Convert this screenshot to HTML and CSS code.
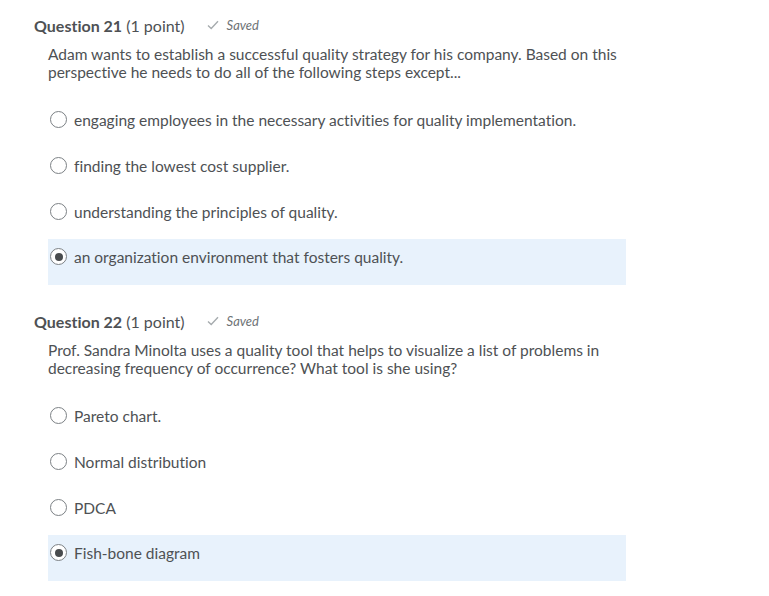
FILE: index.html
```html
<!DOCTYPE html>
<html>
<head>
<meta charset="utf-8">
<link rel="stylesheet" href="styles.css">
</head>
<body>
<div class="page">
  <section class="question">
    <div class="q-head">
      <span class="q-title"><b>Question 21</b> (1 point)</span>
      <span class="saved"><svg class="check" width="12" height="10" viewBox="0 0 12 10"><path d="M1 5.5 L4.2 8.5 L11 1.2" fill="none" stroke="#a6abae" stroke-width="1.4"/></svg><i>Saved</i></span>
    </div>
    <p class="prompt">Adam wants to establish a successful quality strategy for his company. Based on this perspective he needs to do all of the following steps except...</p>
    <div class="options">
      <div class="option"><span class="radio"></span><span>engaging employees in the necessary activities for quality implementation.</span></div>
      <div class="option"><span class="radio"></span><span>finding the lowest cost supplier.</span></div>
      <div class="option"><span class="radio"></span><span>understanding the principles of quality.</span></div>
      <div class="option selected"><span class="radio checked"></span><span>an organization environment that fosters quality.</span></div>
    </div>
  </section>
  <section class="question">
    <div class="q-head">
      <span class="q-title"><b>Question 22</b> (1 point)</span>
      <span class="saved"><svg class="check" width="12" height="10" viewBox="0 0 12 10"><path d="M1 5.5 L4.2 8.5 L11 1.2" fill="none" stroke="#a6abae" stroke-width="1.4"/></svg><i>Saved</i></span>
    </div>
    <p class="prompt">Prof. Sandra Minolta uses a quality tool that helps to visualize a list of problems in decreasing frequency of occurrence? What tool is she using?</p>
    <div class="options">
      <div class="option"><span class="radio"></span><span>Pareto chart.</span></div>
      <div class="option"><span class="radio"></span><span>Normal distribution</span></div>
      <div class="option"><span class="radio"></span><span>PDCA</span></div>
      <div class="option selected"><span class="radio checked"></span><span>Fish-bone diagram</span></div>
    </div>
  </section>
</div>
</body>
</html>
```

FILE: styles.css
```css
html, body {
  margin: 0;
  padding: 0;
  background: #ffffff;
}
body {
  font-family: Lato, "Open Sans", sans-serif;
  color: #4e5154;
  font-variant-ligatures: none;
}
.page {
  padding: 15px 0 0 34px;
  width: 620px;
}
.question {
  margin-bottom: 26px;
}
.q-head {
  display: flex;
  align-items: center;
  height: 20px;
}
.q-title {
  font-size: 16px;
}
.q-title b {
  font-weight: 700;
}
.saved {
  display: flex;
  align-items: center;
  margin-left: 22px;
  font-size: 13px;
  color: #6e7376;
}
.check {
  margin-right: 8px;
}
.prompt {
  margin: 10px 0 0 14px;
  font-size: 15.5px;
  line-height: 18px;
  width: 590px;
}
.options {
  margin: 20px 0 0 14px;
  width: 578px;
}
.option {
  display: flex;
  align-items: flex-start;
  height: 46px;
  box-sizing: border-box;
  padding: 9px 0 0 2px;
  font-size: 15.5px;
  line-height: 20px;
}
.option.selected {
  background: #e8f2fc;
  padding-top: 8px;
}
.radio {
  width: 15px;
  height: 15px;
  margin-top: 1px;
  border: 1px solid #7c8185;
  border-radius: 50%;
  margin-right: 7px;
  box-sizing: content-box;
  background: #fff;
  flex: none;
  display: flex;
  align-items: center;
  justify-content: center;
}
.radio.checked::after {
  content: "";
  width: 8px;
  height: 8px;
  border-radius: 50%;
  background: #494c4e;
}
```
